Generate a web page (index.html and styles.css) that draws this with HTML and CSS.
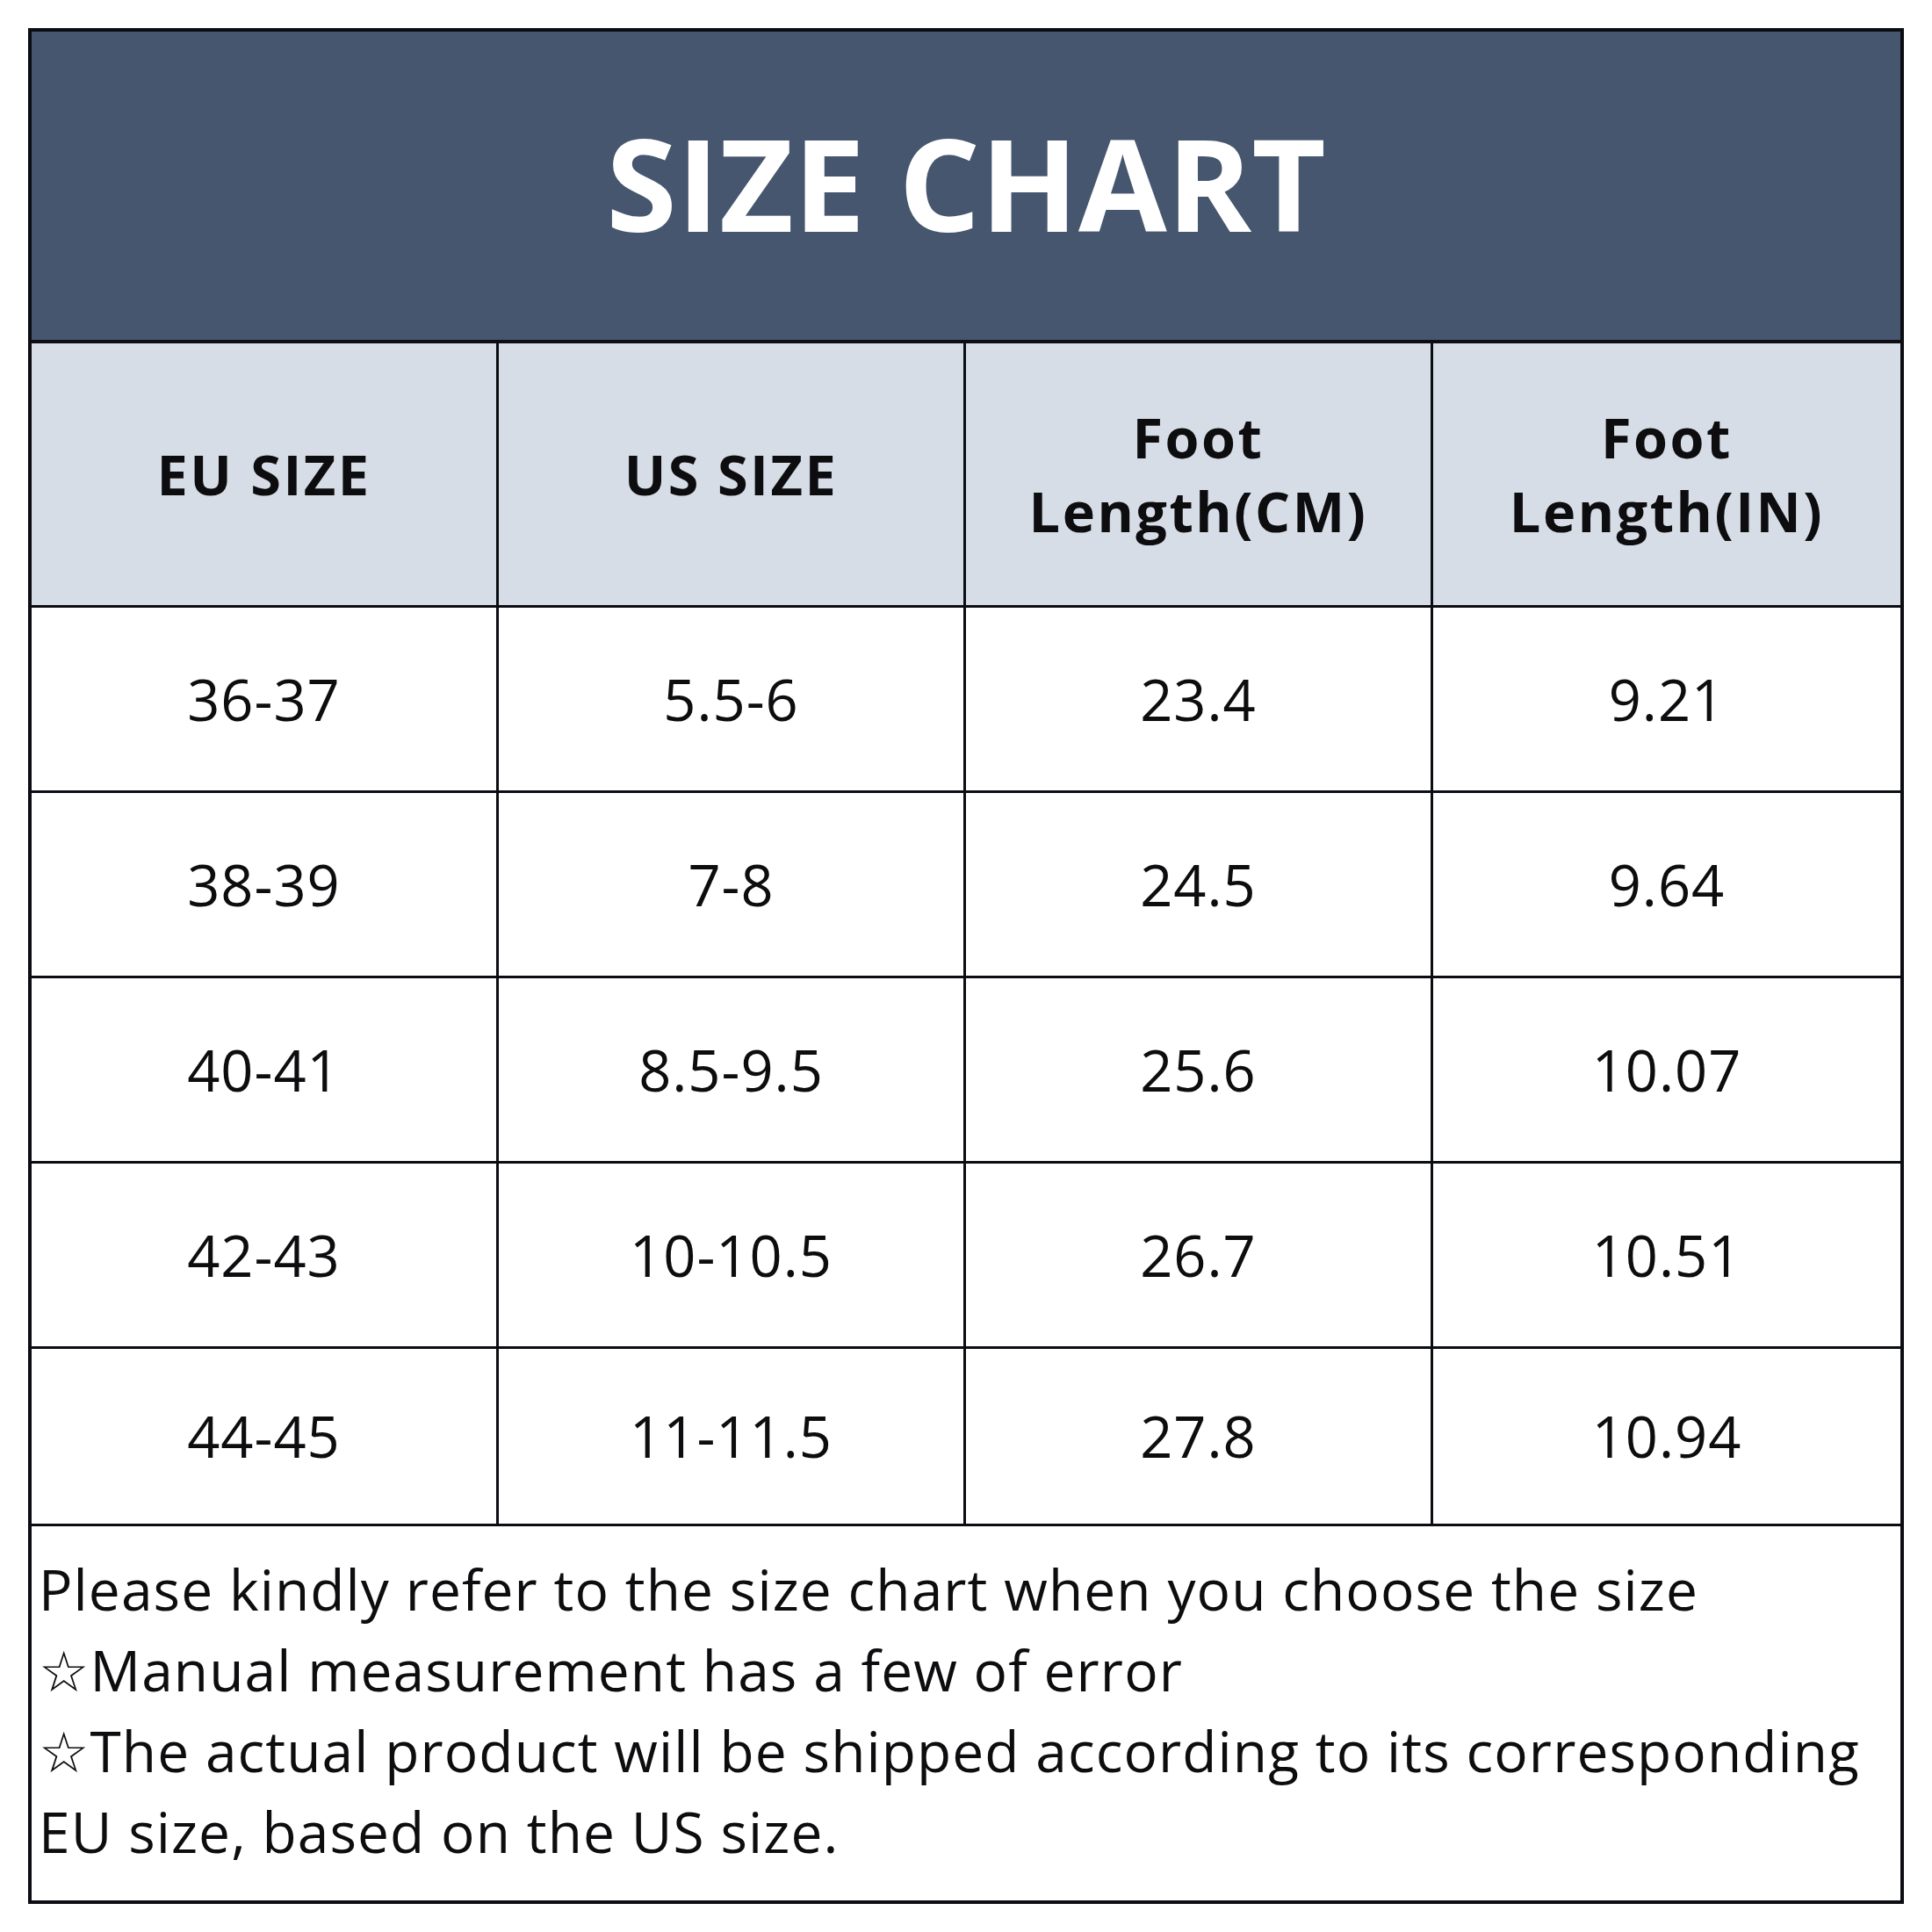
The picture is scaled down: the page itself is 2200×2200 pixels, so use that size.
FILE: index.html
```html
<!DOCTYPE html>
<html lang="en">
<head>
<meta charset="utf-8">
<title>Size Chart</title>
<link rel="stylesheet" href="styles.css">
</head>
<body>
<div class="chart">
  <div class="title">SIZE CHART</div>
  <div class="grid">
    <div class="cell head">EU SIZE</div>
    <div class="cell head">US SIZE</div>
    <div class="cell head">Foot<br>Length(CM)</div>
    <div class="cell head last">Foot<br>Length(IN)</div>

    <div class="cell">36-37</div>
    <div class="cell">5.5-6</div>
    <div class="cell">23.4</div>
    <div class="cell last">9.21</div>

    <div class="cell">38-39</div>
    <div class="cell">7-8</div>
    <div class="cell">24.5</div>
    <div class="cell last">9.64</div>

    <div class="cell">40-41</div>
    <div class="cell">8.5-9.5</div>
    <div class="cell">25.6</div>
    <div class="cell last">10.07</div>

    <div class="cell">42-43</div>
    <div class="cell">10-10.5</div>
    <div class="cell">26.7</div>
    <div class="cell last">10.51</div>

    <div class="cell final">44-45</div>
    <div class="cell final">11-11.5</div>
    <div class="cell final">27.8</div>
    <div class="cell final last">10.94</div>
  </div>
  <div class="notes">
    <p>Please kindly refer to the size chart when you choose the size</p>
    <p>☆Manual measurement has a few of error</p>
    <p>☆The actual product will be shipped according to its corresponding EU size, based on the US size.</p>
  </div>
</div>
</body>
</html>
```
FILE: styles.css
```css
html, body {
  margin: 0;
  padding: 0;
  background: #ffffff;
}

body {
  padding: 32px 0 0 32px;
  font-family: "Open Sans", "DejaVu Sans", sans-serif;
  color: #0d0d0f;
}

.chart {
  width: 2136px;
  box-sizing: border-box;
  border: 4px solid #0b0d12;
  background: #ffffff;
}

.title {
  height: 355px;
  background: #46566e;
  border-bottom: 4px solid #0b0d12;
  display: flex;
  align-items: center;
  justify-content: center;
  color: #ffffff;
  font-weight: 700;
  font-size: 146px;
  letter-spacing: 0;
  padding-bottom: 8px;
  box-sizing: border-box;
}

.grid {
  display: grid;
  grid-template-columns: repeat(4, 1fr);
  grid-template-rows: 301px repeat(4, 211px) 202px;
}

.cell {
  display: flex;
  align-items: center;
  justify-content: center;
  text-align: center;
  border-right: 3px solid #0b0d12;
  border-bottom: 3px solid #0b0d12;
  font-size: 65px;
  letter-spacing: 1px;
  line-height: 1;
  padding-top: 0;
}

.cell.last {
  border-right: none;
}

.cell.head {
  background: #d6dde6;
  font-weight: 700;
  font-size: 63px;
  letter-spacing: 2.5px;
  line-height: 84px;
  padding-top: 0;
}

.notes {
  height: 426px;
  padding: 26px 8px 0 8px;
  box-sizing: border-box;
  font-size: 64px;
  letter-spacing: 1.1px;
  line-height: 92px;
}

.notes p {
  margin: 0;
}
```
